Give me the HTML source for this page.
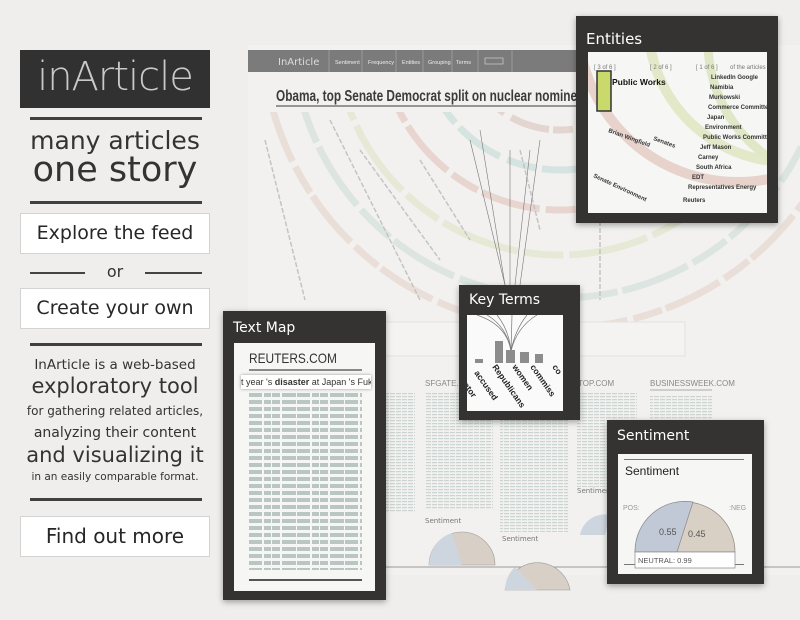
<!DOCTYPE html>
<html><head><meta charset="utf-8">
<style>
*{margin:0;padding:0;box-sizing:border-box}
body{width:800px;height:620px;overflow:hidden;background:#efeeec;font-family:"DejaVu Sans","Liberation Sans",sans-serif;position:relative;color:#2e2e2e}
.abs{position:absolute}
.logo{left:20px;top:50px;width:190px;height:58px;background:#323131;color:#c9c9c9;font-size:40px;text-align:center;line-height:54px;letter-spacing:-1px;font-family:"DejaVu Sans",sans-serif;font-weight:300}
.rule{height:3px;background:#404040;left:30px;width:172px}
.btn{left:20px;width:190px;height:41px;background:#fff;border:1px solid #d3d3d3;text-align:center;font-size:19px;line-height:39px;color:#262626}
.tx{left:20px;width:190px;text-align:center;color:#333;white-space:nowrap}
.panel{background:#353232;box-shadow:0 2px 6px rgba(0,0,0,.35)}
.panel .t{color:#fff;font-size:15px;position:absolute;left:10px;top:5px}
.inner{position:absolute;background:#f6f6f4}
.n{font-family:"Liberation Sans",sans-serif}
.tmap{background:
repeating-linear-gradient(90deg,transparent 0 13px,#f6f6f4 13px 15px,transparent 15px 22px,#f6f6f4 22px 23px,transparent 23px 31px,#f6f6f4 31px 33px,transparent 33px 47px,#f6f6f4 47px 48px),
repeating-linear-gradient(180deg,#b9c6c3 0 4px,transparent 4px 7px)}
</style></head><body>

<svg class="abs" style="left:0;top:0" width="800" height="620">
<defs>
<pattern id="p" width="6" height="3" patternUnits="userSpaceOnUse"><rect width="5" height="1.2" fill="#ccd4d3"/></pattern>
<clipPath id="c"><rect x="248" y="112" width="552" height="215"/></clipPath>
</defs>
<rect x="248" y="45" width="552" height="530" fill="#f2f1ef"/>
<rect x="248" y="50" width="335" height="22" fill="#7b7b7b"/>
<text x="278" y="65" font-size="10" fill="#ddd" font-family="DejaVu Sans">InArticle</text>
<g fill="#eee" font-size="5.5" font-family="Liberation Sans">
<text x="335" y="64">Sentiment</text><text x="368" y="64">Frequency</text><text x="402" y="64">Entities</text><text x="428" y="64">Grouping</text><text x="456" y="64">Terms</text>
</g>
<g stroke="#999" stroke-width="1"><line x1="329" y1="50" x2="329" y2="72"/><line x1="362" y1="50" x2="362" y2="72"/><line x1="396" y1="50" x2="396" y2="72"/><line x1="423" y1="50" x2="423" y2="72"/><line x1="452" y1="50" x2="452" y2="72"/><line x1="478" y1="50" x2="478" y2="72"/><line x1="512" y1="50" x2="512" y2="72"/></g>
<rect x="485" y="58" width="18" height="6" fill="none" stroke="#ddd" stroke-width=".6"/>
<text x="276" y="101" font-size="16" font-weight="bold" fill="#3b3b3b" font-family="Liberation Sans" transform="translate(276 0) scale(0.74 1) translate(-276 0)">Obama, top Senate Democrat split on nuclear nominee</text>
<line x1="276" y1="106" x2="580" y2="106" stroke="#777" stroke-width="1.5"/>
<g clip-path="url(#c)">
<g fill="none" stroke-width="7" opacity=".8">
<circle cx="560" cy="30" r="100" stroke="#e0cfc9" stroke-dasharray="30 6 20 4 40 8"/>
<circle cx="560" cy="30" r="140" stroke="#cfe0de" stroke-dasharray="50 6 30 8"/>
<circle cx="560" cy="30" r="180" stroke="#e6cfc9" stroke-dasharray="60 5 30 6"/>
<circle cx="560" cy="30" r="225" stroke="#e4e8cf" stroke-dasharray="80 6 40 6"/>
<circle cx="560" cy="30" r="268" stroke="#d7e3df" stroke-dasharray="40 6 70 5"/>
<circle cx="560" cy="30" r="298" stroke="#e9dad4" stroke-dasharray="60 4 30 6"/>
</g>
<g stroke="#c4c4c4" stroke-width="1.5" stroke-dasharray="5 2">
<line x1="265" y1="140" x2="305" y2="300"/><line x1="330" y1="120" x2="420" y2="300"/><line x1="360" y1="150" x2="440" y2="260"/><line x1="420" y1="160" x2="470" y2="240"/>
<line x1="520" y1="150" x2="540" y2="230"/><line x1="600" y1="200" x2="600" y2="300"/>
</g>
<g stroke="#777" stroke-width=".6"><line x1="470" y1="140" x2="505" y2="285"/><line x1="480" y1="130" x2="505" y2="285"/><line x1="510" y1="150" x2="510" y2="285"/><line x1="530" y1="150" x2="515" y2="285"/><line x1="540" y1="140" x2="520" y2="285"/></g>
</g>
<rect x="385" y="322" width="300" height="34" fill="#f4f3f1" stroke="#e2e2e2"/>
<g font-size="8" fill="#888" font-family="Liberation Sans">
<text x="425" y="386">SFGATE.COM</text><text x="578" y="386">TOP.COM</text><text x="650" y="386">BUSINESSWEEK.COM</text>
</g>
<line x1="650" y1="390" x2="712" y2="390" stroke="#aaa"/>
<line x1="385" y1="567" x2="800" y2="567" stroke="#999"/>
<g font-size="7" fill="#777"><text x="425" y="523">Sentiment</text><text x="502" y="541">Sentiment</text><text x="577" y="493">Sentiment</text></g>
<path d="M429 565 A33 33 0 0 1 495 565 Z" fill="#d8cfc6" stroke="#999" stroke-width=".6"/><path d="M429 565 A33 33 0 0 1 452 533 L462 565Z" fill="#cdd5df"/>
<path d="M505 590 A33 33 0 0 1 570 590 Z" fill="#d8cfc6" stroke="#999" stroke-width=".6"/><path d="M505 590 A33 33 0 0 1 515 567 L537 590Z" fill="#cdd5df"/>
<path d="M580 535 A25 25 0 0 1 610 515 L605 535Z" fill="#cdd5df"/>
<rect x="380" y="392" width="35" height="120" fill="url(#p)"/>
<rect x="425" y="392" width="68" height="118" fill="url(#p)"/>
<rect x="500" y="392" width="68" height="140" fill="url(#p)"/>
<rect x="577" y="392" width="60" height="95" fill="url(#p)"/>
<rect x="650" y="395" width="62" height="30" fill="url(#p)"/>
</svg>

<div class="abs logo">inArticle</div>
<div class="abs rule" style="top:117px"></div>
<div class="abs tx" style="top:127px;font-size:25px;line-height:28px">many articles</div>
<div class="abs tx" style="top:150px;font-size:35px;line-height:40px">one story</div>
<div class="abs rule" style="top:201px"></div>
<div class="abs btn" style="top:213px">Explore the feed</div>
<div class="abs" style="left:30px;top:272px;width:55px;height:2px;background:#444"></div>
<div class="abs" style="left:145px;top:272px;width:57px;height:2px;background:#444"></div>
<div class="abs tx" style="top:262px;font-size:16px">or</div>
<div class="abs btn" style="top:288px">Create your own</div>
<div class="abs rule" style="top:343px"></div>
<div class="abs tx" style="top:357px;font-size:13.5px">InArticle is a web-based</div>
<div class="abs tx" style="top:374px;font-size:21px">exploratory tool</div>
<div class="abs tx" style="top:404px;font-size:12px">for gathering related articles,</div>
<div class="abs tx" style="top:425px;font-size:14px">analyzing their content</div>
<div class="abs tx" style="top:443px;font-size:21px">and visualizing it</div>
<div class="abs tx" style="top:471px;font-size:10.5px">in an easily comparable format.</div>
<div class="abs rule" style="top:498px"></div>
<div class="abs btn" style="top:516px;height:41px;font-size:20px">Find out more</div>

<div class="abs panel" style="left:576px;top:16px;width:202px;height:207px">
<div class="t" style="top:14px">Entities</div>
<div class="inner" style="left:12px;top:36px;width:179px;height:161px;overflow:hidden">
<svg width="179" height="161">
<circle cx="150" cy="-30" r="160" fill="none" stroke="#e8d3cc" stroke-width="10"/>
<circle cx="200" cy="-30" r="140" fill="none" stroke="#e3e9c8" stroke-width="10"/>
<circle cx="260" cy="-10" r="140" fill="none" stroke="#dfe7c6" stroke-width="9"/>
<rect x="9" y="19" width="14" height="40" fill="#c9d96b" stroke="#333" stroke-width="1.5"/>
<g font-size="6" fill="#777" font-family="Liberation Sans"><text x="6" y="17">[ 3 of 6 ]</text><text x="62" y="17">[ 2 of 6 ]</text><text x="108" y="17">[ 1 of 6 ]</text><text x="142" y="17">of the articles</text></g>
<text x="24" y="33" font-size="8.5" font-weight="bold" fill="#111" font-family="Liberation Sans">Public Works</text>
<g font-size="6" font-weight="bold" fill="#333" font-family="Liberation Sans">
<text x="123" y="27">LinkedIn Google</text><text x="122" y="37">Namibia</text><text x="121" y="47">Murkowski</text><text x="120" y="57">Commerce Committee</text><text x="119" y="67">Japan</text><text x="117" y="77">Environment</text><text x="115" y="87">Public Works Committee</text><text x="112" y="97">Jeff Mason</text><text x="110" y="107">Carney</text><text x="108" y="117">South Africa</text><text x="104" y="127">EDT</text><text x="100" y="137">Representatives Energy</text><text x="95" y="150">Reuters</text>
<text x="20" y="80" transform="rotate(20 20 80)">Brian Wingfield</text><text x="65" y="88" transform="rotate(20 65 88)">Senates</text><text x="5" y="125" transform="rotate(25 5 125)">Senate Environment</text>
</g></svg></div></div>

<div class="abs panel" style="left:459px;top:285px;width:121px;height:135px">
<div class="t" style="top:7px;font-size:14px">Key Terms</div>
<div class="inner" style="left:8px;top:30px;width:96px;height:96px;background:#fafafa;overflow:hidden">
<svg width="96" height="96"><g stroke="#777" stroke-width=".7" fill="none">
<path d="M10 0 Q40 10 44 36"/><path d="M20 0 Q40 12 44 36"/><path d="M30 0 Q42 15 44 36"/><path d="M45 0 L44 36"/><path d="M60 0 Q48 15 44 36"/><path d="M70 0 Q50 12 44 36"/></g>
<g fill="#8c8c8c"><rect x="8" y="44" width="8" height="4"/><rect x="28" y="26" width="8" height="22"/><rect x="39" y="35" width="9" height="13"/><rect x="53" y="37" width="9" height="11"/><rect x="68" y="39" width="8" height="9"/></g>
<g font-size="8.5" font-weight="bold" fill="#222" font-family="Liberation Sans">
<text x="7" y="58" transform="rotate(55 7 58)">accused</text><text x="25" y="52" transform="rotate(55 25 52)">Republicans</text><text x="45" y="52" transform="rotate(55 45 52)">women</text><text x="63" y="52" transform="rotate(55 63 52)">commiss</text><text x="85" y="52" transform="rotate(55 85 52)">co</text><text x="-4" y="70" transform="rotate(55 -4 70)">ator</text></g></svg></div></div>

<div class="abs panel" style="left:223px;top:311px;width:163px;height:289px">
<div class="t" style="top:9px;font-size:14px">Text Map</div>
<div class="inner" style="left:11px;top:32px;width:141px;height:248px">
<div class="abs n" style="left:15px;top:7px;font-size:14px;color:#333;transform:scaleX(.85);transform-origin:left">REUTERS.COM</div>
<div class="abs" style="left:15px;top:26px;width:113px;height:2px;background:#888"></div>
<div class="abs n" style="left:7px;top:32px;width:130px;height:14px;background:#fff;box-shadow:0 0 3px #999;font-size:9px;line-height:14px;white-space:nowrap;overflow:hidden;color:#333">t year 's <b>disaster</b> at Japan 's Fuku</div>
<div class="abs tmap" style="left:15px;top:50px;width:113px;height:177px"></div>
<div class="abs" style="left:15px;top:236px;width:113px;height:2px;background:#555"></div>
</div></div>

<div class="abs panel" style="left:607px;top:420px;width:157px;height:164px">
<div class="t" style="top:8px;font-size:14px">Sentiment</div>
<div class="inner" style="left:11px;top:34px;width:134px;height:120px">
<div class="abs" style="left:6px;top:5px;width:120px;height:1px;background:#777"></div>
<div class="abs n" style="left:7px;top:10px;font-size:12px;color:#222">Sentiment</div>
<div class="abs" style="left:6px;top:110px;width:120px;height:1px;background:#777"></div>
<svg class="abs" style="left:0;top:0" width="134" height="120">
<path d="M17 98 A50 50 0 0 1 117 98 Z" fill="#d9d0c5" stroke="#888" stroke-width=".7"/>
<path d="M17 98 A50 50 0 0 1 75 48 L59 98 Z" fill="#c0c9d5" stroke="#888" stroke-width=".7"/>
<text x="41" y="81" font-size="9" fill="#555" font-family="Liberation Sans">0.55</text><text x="70" y="83" font-size="9" fill="#555" font-family="Liberation Sans">0.45</text>
<text x="5" y="56" font-size="7" fill="#999" font-family="Liberation Sans">POS:</text><text x="111" y="56" font-size="7" fill="#999" font-family="Liberation Sans">:NEG</text>
<rect x="17" y="98" width="100" height="16" fill="#fff" stroke="#888" stroke-width=".7"/>
<text x="20" y="109" font-size="7.5" fill="#555" font-family="Liberation Sans">NEUTRAL: 0.99</text>
</svg></div></div>
</body></html>
